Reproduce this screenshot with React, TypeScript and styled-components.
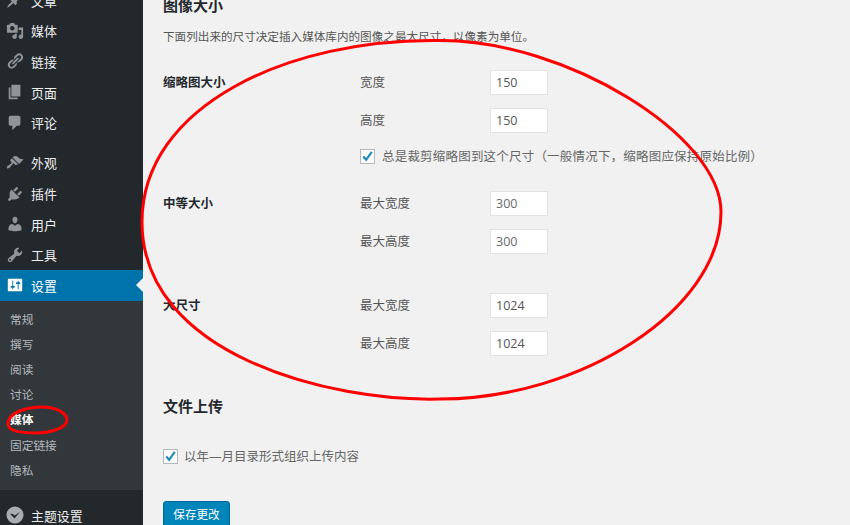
import React from "react";
import styled, { createGlobalStyle } from "styled-components";

const FONT = '"Open Sans", "Noto Sans CJK SC", "Liberation Sans", sans-serif';

const Global = createGlobalStyle`
  html, body { margin: 0; padding: 0; background: #f1f1f1; overflow: hidden; }
  body { font-family: ${FONT}; }
`;

const Page = styled.div`
  position: relative;
  width: 850px;
  height: 525px;
  overflow: hidden;
  display: flex;
  background: #f1f1f1;
`;

const Sidebar = styled.nav`
  width: 143px;
  flex: none;
  height: 525px;
  overflow: hidden;
  background: #23282d;
  display: flex;
  flex-direction: column;
`;

const MenuList = styled.div<{ $offset?: number }>`
  display: flex;
  flex-direction: column;
  margin-top: ${(p) => p.$offset ?? 0}px;
`;

const MenuItem = styled.div<{ $active?: boolean }>`
  position: relative;
  height: 30.6px;
  flex: none;
  display: flex;
  align-items: center;
  gap: 7px;
  padding-left: 6px;
  font-size: 12.9px;
  color: ${(p) => (p.$active ? "#fff" : "#eee")};
  background: ${(p) => (p.$active ? "#0073aa" : "transparent")};
  ${(p) =>
    p.$active
      ? `&::after {
          content: "";
          position: absolute;
          right: 0;
          top: 8px;
          border: 7px solid transparent;
          border-right-color: #f1f1f1;
          border-left-width: 0;
        }`
      : ""}
`;

const MenuIcon = styled.svg<{ $active?: boolean }>`
  width: 18px;
  height: 18px;
  flex: none;
  fill: ${(p) => (p.$active ? "#fff" : "#8f9498")};
`;

const SubMenu = styled.div`
  background: #32373c;
  padding: 6px 0 7.2px 10px;
  display: flex;
  flex-direction: column;
`;

const SubItem = styled.div<{ $current?: boolean }>`
  height: 25.2px;
  line-height: 25.2px;
  font-size: 11.7px;
  color: ${(p) => (p.$current ? "#fff" : "#b4b9be")};
  font-weight: ${(p) => (p.$current ? 700 : 400)};
`;

const Main = styled.main`
  flex: 1;
  padding-left: 20px;
  display: flex;
  flex-direction: column;
  align-items: flex-start;
  color: #444;
`;

const Heading = styled.h2<{ $top: number }>`
  margin: ${(p) => p.$top}px 0 0;
  height: 20px;
  line-height: 20px;
  font-size: 15px;
  font-weight: 700;
  color: #23282d;
`;

const Description = styled.p`
  margin: 12px 0 0;
  height: 20px;
  line-height: 20px;
  font-size: 11.6px;
  color: #555;
  white-space: nowrap;
`;

const Group = styled.section<{ $top: number }>`
  margin-top: ${(p) => p.$top}px;
  display: grid;
  grid-template-columns: 197px auto;
`;

const GroupLabel = styled.div`
  line-height: 25px;
  font-size: 12.5px;
  font-weight: 700;
  color: #23282d;
`;

const Fields = styled.div`
  display: flex;
  flex-direction: column;
  gap: 13px;
`;

const FieldRow = styled.label`
  display: grid;
  grid-template-columns: 130px 58px;
  align-items: center;
  font-size: 12.5px;
  line-height: 23px;
  color: #555;
`;

const NumberInput = styled.input<{ $muted?: boolean }>`
  box-sizing: border-box;
  width: 58px;
  height: 25px;
  padding: 0 5px;
  border: 1px solid #e2e2e2;
  background: #fff;
  font-family: ${FONT};
  font-size: 12.5px;
  color: ${(p) => (p.$muted ? "#6a6a6a" : "#555")};
  outline: none;
  border-radius: 0;
`;

const CheckRow = styled.label<{ $top?: number; $spacing?: number; $gap?: number }>`
  margin-top: ${(p) => p.$top ?? 3}px;
  display: flex;
  align-items: center;
  gap: ${(p) => p.$gap ?? 6}px;
  height: 15px;
  font-size: 12.5px;
  letter-spacing: ${(p) => p.$spacing ?? 0}px;
  color: #666;
  white-space: nowrap;
`;

const CheckText = styled.span`
  margin-top: -2px;
`;

const CheckBox = styled.span`
  box-sizing: border-box;
  width: 15px;
  height: 15px;
  flex: none;
  border: 1px solid #b4b9be;
  background: #fdfdfd;
  display: flex;
  align-items: center;
  justify-content: center;
`;

const CheckMark = styled.svg`
  width: 13px;
  height: 13px;
  fill: #1e8cbe;
`;

const SaveButton = styled.button`
  margin-top: 37px;
  box-sizing: border-box;
  width: 67px;
  height: 27px;
  flex: none;
  padding: 0 0 2px;
  border: 1px solid #006799;
  border-radius: 3px;
  background: #0085ba;
  color: #fff;
  font-family: ${FONT};
  font-size: 11.6px;
`;

const Annotations = styled.svg`
  position: absolute;
  left: 0;
  top: 0;
  width: 850px;
  height: 525px;
  pointer-events: none;
  fill: none;
  stroke: #ff0000;
  stroke-linecap: round;
  stroke-linejoin: round;
`;

const ICONS: Record<string, string> = {
  post: "M10.44 3.02l1.82-1.82 6.36 6.35-1.83 1.82c-1.05-.68-2.48-.57-3.41.36l-.75.75c-.92.93-1.04 2.35-.35 3.41l-1.83 1.82-2.41-2.41-2.8 2.79c-.42.42-3.38 2.71-3.8 2.29s1.86-3.39 2.28-3.81l2.79-2.79L4.1 9.36l1.83-1.82c1.05.69 2.48.57 3.4-.36l.75-.75c.93-.92 1.05-2.35.36-3.41z",
  media: "M13 11V4c0-.55-.45-1-1-1h-1.67L9 1H5L3.67 3H2c-.55 0-1 .45-1 1v7c0 .55.45 1 1 1h10c.55 0 1-.45 1-1zM7 4.5c1.38 0 2.5 1.12 2.5 2.5S8.38 9.5 7 9.5 4.5 8.38 4.5 7 5.62 4.5 7 4.5zM14 6h5v10.5c0 1.38-1.12 2.5-2.5 2.5S14 17.88 14 16.5s1.12-2.5 2.5-2.5c.17 0 .34.02.5.05V9h-3V6zm-4 8.05V13h2v3.5c0 1.38-1.12 2.5-2.5 2.5S7 17.88 7 16.5 8.12 14 9.5 14c.17 0 .34.02.5.05z",
  links: "M17.74 2.76c1.68 1.69 1.68 4.41 0 6.1l-1.53 1.52c-1.12 1.12-2.7 1.47-4.14 1.09l2.62-2.61.76-.77.76-.76c.84-.84.84-2.2 0-3.04-.84-.85-2.2-.85-3.04 0l-.77.76-3.38 3.38c-.37-1.44-.02-3.02 1.1-4.14l1.52-1.53c1.69-1.68 4.42-1.68 6.1 0zM8.59 13.43l5.34-5.34c.42-.42.42-1.1 0-1.52-.44-.43-1.13-.39-1.53 0l-5.33 5.34c-.42.42-.42 1.1 0 1.52.44.43 1.13.39 1.52 0zm-.76 2.29l4.14-4.15c.38 1.44.03 3.02-1.09 4.14l-1.52 1.53c-1.69 1.68-4.41 1.68-6.1 0-1.68-1.68-1.68-4.42 0-6.1l1.53-1.52c1.12-1.12 2.7-1.47 4.14-1.1l-4.14 4.15c-.85.84-.85 2.2 0 3.05.84.84 2.2.84 3.04 0z",
  page: "M6 15V2h10v13H6zm-1 1h8v2H3V5h2v11z",
  comments: "M5 2h9c1.1 0 2 .9 2 2v7c0 1.1-.9 2-2 2h-2l-5 5v-5H5c-1.1 0-2-.9-2-2V4c0-1.1.9-2 2-2z",
  appearance: "M14.48 11.06L7.41 3.99l1.5-1.5c.5-.56 2.3-.47 3.51.32 1.21.8 1.43 1.28 2.91 2.1 1.18.64 2.45 1.26 4.45.85zm-.71.71L6.7 4.7 4.93 6.47c-.39.39-.39 1.02 0 1.41l1.06 1.06c.39.39.39 1.03 0 1.42-.6.6-1.43 1.11-2.21 1.69-.35.26-.7.53-1.01.84C1.43 13.23.4 14.91 1.2 15.7c.79.8 2.47-.23 3.83-1.59.31-.31.58-.66.84-1.01.58-.78 1.09-1.61 1.69-2.21.39-.39 1.02-.39 1.41 0l1.06 1.06c.39.39 1.02.39 1.41 0z",
  plugins: "M13.11 4.36L9.87 7.6 8 5.73l3.24-3.24c.35-.34 1.05-.2 1.56.32.52.51.66 1.21.31 1.55zm-8 1.77l.91-1.12 9.01 9.01-1.19.84c-.71.71-2.63 1.16-3.82 1.16H6.14L4.9 17.26c-.59.59-1.54.59-2.12 0-.59-.58-.59-1.53 0-2.12l1.24-1.24v-3.88c0-1.13.4-3.19 1.09-3.89zm7.26 3.97l3.24-3.24c.34-.35 1.04-.21 1.55.31.52.51.66 1.21.31 1.55l-3.24 3.25z",
  users: "M10 9.25c-2.27 0-2.73-3.44-2.73-3.44C7 4.02 7.82 2 9.97 2c2.16 0 2.98 2.02 2.71 3.81 0 0-.41 3.44-2.68 3.44zm0 2.57L12.72 10c2.39 0 4.52 2.33 4.52 4.53v2.49s-3.65 1.13-7.24 1.13c-3.65 0-7.24-1.13-7.24-1.13v-2.49c0-2.25 1.94-4.48 4.47-4.48z",
  tools: "M16.68 9.77c-1.34 1.34-3.3 1.67-4.95.99l-5.41 6.52c-.99.99-2.59.99-3.58 0s-.99-2.59 0-3.57l6.52-5.42c-.68-1.65-.35-3.61.99-4.95 1.28-1.28 3.12-1.62 4.72-1.06l-2.89 2.89 2.82 2.82 2.86-2.87c.53 1.58.18 3.39-1.08 4.65zM3.81 16.21c.4.39 1.04.39 1.43 0 .4-.4.4-1.04 0-1.43-.39-.4-1.03-.4-1.43 0-.39.39-.39 1.03 0 1.43z",
  settings: "M18 16V4c0-.55-.45-1-1-1H3c-.55 0-1 .45-1 1v12c0 .55.45 1 1 1h14c.55 0 1-.45 1-1zM8 11h1c.55 0 1 .45 1 1s-.45 1-1 1H8v1.5c0 .28-.22.5-.5.5s-.5-.22-.5-.5V13H6c-.55 0-1-.45-1-1s.45-1 1-1h1V5.5c0-.28.22-.5.5-.5s.5.22.5.5V11zm5-2h-1c-.55 0-1-.45-1-1s.45-1 1-1h1V5.5c0-.28.22-.5.5-.5s.5.22.5.5V7h1c.55 0 1 .45 1 1s-.45 1-1 1h-1v5.5c0 .28-.22.5-.5.5s-.5-.22-.5-.5V9z",
};

const Item = ({ icon, label, active }: { icon: string; label: string; active?: boolean }) => (
  <MenuItem $active={active}>
    <MenuIcon viewBox="0 0 20 20" $active={active}>
      <path d={ICONS[icon]} />
    </MenuIcon>
    {label}
  </MenuItem>
);

const Check = () => (
  <CheckBox>
    <CheckMark viewBox="0 0 16 16">
      <path d="M6.4 14.2 1.8 8.9l2-1.8 2.5 2.8L12.2 1.6l2.2 1.6z" />
    </CheckMark>
  </CheckBox>
);

const Field = ({ label, value, muted }: { label: string; value: string; muted?: boolean }) => (
  <FieldRow>
    {label}
    <NumberInput readOnly defaultValue={value} $muted={muted} />
  </FieldRow>
);

export default function App() {
  return (
    <Page>
      <Global />
      <Sidebar>
        <MenuList $offset={-15}>
          <Item icon="post" label="文章" />
          <Item icon="media" label="媒体" />
          <Item icon="links" label="链接" />
          <Item icon="page" label="页面" />
          <Item icon="comments" label="评论" />
        </MenuList>
        <MenuList $offset={9.7}>
          <Item icon="appearance" label="外观" />
          <Item icon="plugins" label="插件" />
          <Item icon="users" label="用户" />
          <Item icon="tools" label="工具" />
          <Item icon="settings" label="设置" active />
        </MenuList>
        <SubMenu>
          <SubItem>常规</SubItem>
          <SubItem>撰写</SubItem>
          <SubItem>阅读</SubItem>
          <SubItem>讨论</SubItem>
          <SubItem $current>媒体</SubItem>
          <SubItem>固定链接</SubItem>
          <SubItem>隐私</SubItem>
        </SubMenu>
        <MenuList $offset={10}>
          <MenuItem>
            <MenuIcon viewBox="0 0 20 20">
              <circle cx="10" cy="10" r="9.5" fill="#a9adb1" />
              <path d="M4.5 8.5 9.5 14 15.5 6.5 12.5 8.5 9.8 10.6 7.5 8.8z" fill="#23282d" />
            </MenuIcon>
            主题设置
          </MenuItem>
        </MenuList>
      </Sidebar>
      <Main>
        <Heading $top={-5}>图像大小</Heading>
        <Description>下面列出来的尺寸决定插入媒体库内的图像之最大尺寸，以像素为单位。</Description>
        <Group $top={23}>
          <GroupLabel>缩略图大小</GroupLabel>
          <Fields>
            <Field label="宽度" value="150" />
            <Field label="高度" value="150" />
            <CheckRow $spacing={0.2} $gap={7}>
              <Check />
              <CheckText>总是裁剪缩略图到这个尺寸（一般情况下，缩略图应保持原始比例）</CheckText>
            </CheckRow>
          </Fields>
        </Group>
        <Group $top={27}>
          <GroupLabel>中等大小</GroupLabel>
          <Fields>
            <Field label="最大宽度" value="300" muted />
            <Field label="最大高度" value="300" muted />
          </Fields>
        </Group>
        <Group $top={39}>
          <GroupLabel>大尺寸</GroupLabel>
          <Fields>
            <Field label="最大宽度" value="1024" />
            <Field label="最大高度" value="1024" />
          </Fields>
        </Group>
        <Heading $top={40}>文件上传</Heading>
        <CheckRow $top={33}>
          <Check />
          <CheckText>以年—月目录形式组织上传内容</CheckText>
        </CheckRow>
        <SaveButton>保存更改</SaveButton>
      </Main>
      <Annotations viewBox="0 0 850 525">
        <path
          d="M440 40.5C565 40 721 135 721 212C721 310 580 399 440 399C330 402 142 355 142 222C142 105 290 38 440 40.5Z"
          strokeWidth={3}
        />
        <path
          d="M8 424C8 412 28 407 42 407C56 407 67 413 67 420C67 428 50 433 36 433C20 433 8 431 8 424Z"
          strokeWidth={3}
        />
      </Annotations>
    </Page>
  );
}
